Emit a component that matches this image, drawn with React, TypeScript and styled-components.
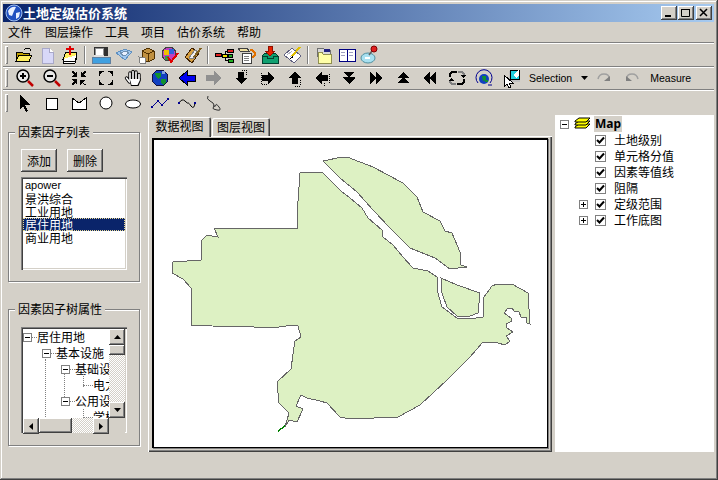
import { Fragment } from "react";
import styled, { createGlobalStyle, css } from "styled-components";

const FONT = `"Noto Sans CJK SC", "Liberation Sans", sans-serif`;

const GlobalStyle = createGlobalStyle`
  html, body {
    margin: 0;
    padding: 0;
    background: #d4d0c8;
  }
  * {
    box-sizing: border-box;
  }
`;

const raised = css`
  background: #d4d0c8;
  box-shadow: inset -1px -1px 0 #404040, inset 1px 1px 0 #fff, inset -2px -2px 0 #808080;
`;

const sunken = css`
  box-shadow: inset 1px 1px 0 #808080, inset 2px 2px 0 #404040, inset -1px -1px 0 #fff, inset -2px -2px 0 #d4d0c8;
`;

const Window = styled.div`
  width: 718px;
  height: 480px;
  padding: 4px 4px 4px 3px;
  display: flex;
  flex-direction: column;
  background: #d4d0c8;
  box-shadow: inset -1px -1px 0 #404040, inset 1px 1px 0 #d4d0c8, inset -2px -2px 0 #808080, inset 2px 2px 0 #fff;
  font: 12px/14px ${FONT};
  color: #000;
  overflow: hidden;
`;

const TitleBar = styled.div`
  height: 18px;
  flex: none;
  display: flex;
  align-items: center;
  padding: 0 2px;
  background: linear-gradient(90deg, #0a246a, #a6caf0);
`;

const TitleText = styled.span`
  font-size: 13px;
  font-weight: 700;
  color: #fff;
  flex: 1;
`;

const CaptionButtons = styled.div`
  display: flex;
`;

const CaptionButton = styled.div<{ $gap?: number }>`
  ${raised};
  width: 16px;
  height: 14px;
  margin-left: ${(p) => p.$gap ?? 1}px;
  display: flex;
  align-items: center;
  justify-content: center;
`;

const MenuBar = styled.div`
  height: 20px;
  flex: none;
  display: flex;
  align-items: center;
  padding-left: 5px;
`;

const MenuItem = styled.span`
  margin-right: 12px;
  &:first-child {
    margin-right: 13px;
  }
`;

const Toolbar = styled.div<{ $h: number }>`
  height: ${(p) => p.$h}px;
  flex: none;
  display: flex;
  align-items: center;
  padding: 1px 0 0 2px;
  box-shadow: inset 0 1px 0 #808080, inset 0 2px 0 #fff;
`;

const Handle = styled.div<{ $mr: number }>`
  width: 3px;
  height: 18px;
  margin-right: ${(p) => p.$mr}px;
  background: #d4d0c8;
  box-shadow: inset 1px 1px 0 #fff, inset -1px -1px 0 #808080;
`;

const Slot = styled.div<{ $w: number }>`
  width: ${(p) => p.$w}px;
  flex: none;
  height: 20px;
  display: flex;
  align-items: center;
  justify-content: center;
`;

const Sep = styled.div`
  width: 8px;
  flex: none;
  height: 18px;
  display: flex;
  justify-content: center;
  &::before {
    content: "";
    width: 2px;
    background: #808080;
    box-shadow: inset -1px 0 0 #fff;
  }
`;

const ToolLabel = styled.span<{ $ml: number }>`
  margin-left: ${(p) => p.$ml}px;
  font: 10.5px/14px "Liberation Sans", sans-serif;
  color: #000;
`;

const Ico = styled.svg`
  width: 20px;
  height: 20px;
  display: block;
  shape-rendering: crispEdges;
`;

const Main = styled.div`
  height: 337px;
  flex: none;
  display: flex;
`;

const LeftPane = styled.div`
  width: 145px;
  flex: none;
  padding-left: 5px;
`;

const Group = styled.div<{ $mt: number; $h: number; $pt: number }>`
  position: relative;
  width: 132px;
  height: ${(p) => p.$h}px;
  margin-top: ${(p) => p.$mt}px;
  padding: ${(p) => p.$pt}px 0 0 12px;
  border: 1px solid #808080;
  box-shadow: inset 1px 1px 0 #fff, 1px 1px 0 #fff;
`;

const Legend = styled.div`
  position: absolute;
  left: 6px;
  top: -8px;
  padding: 0 3px;
  background: #d4d0c8;
  line-height: 14px;
`;

const ButtonRow = styled.div`
  display: flex;
  gap: 10px;
`;

const PushButton = styled.button`
  ${raised};
  width: 36px;
  height: 23px;
  padding: 0;
  border: 0;
  font: 12px/14px ${FONT};
  color: #000;
`;

const ListBox = styled.div`
  ${sunken};
  width: 106px;
  height: 93px;
  margin-top: 5px;
  padding: 2px;
  background: #fff;
`;

const ListItem = styled.div<{ $selected?: boolean; $latin?: boolean }>`
  height: 13px;
  padding-left: 2px;
  line-height: 13px;
  white-space: nowrap;
  font-family: ${(p) => (p.$latin ? `"Liberation Sans", sans-serif` : FONT)};
  font-size: ${(p) => (p.$latin ? 11 : 12)}px;
  background: ${(p) => (p.$selected ? "#0a246a" : "transparent")};
  color: ${(p) => (p.$selected ? "#fff" : "#000")};
  outline: ${(p) => (p.$selected ? "1px dotted #e8d890" : "none")};
  outline-offset: -1px;
`;

const TreeBox = styled.div`
  ${sunken};
  width: 106px;
  height: 106px;
  padding: 2px;
  background: #fff;
  display: grid;
  grid-template-columns: 86px 16px;
  grid-template-rows: 89px 15px;
`;

const TreeContent = styled.div`
  position: relative;
  overflow: hidden;
`;

const TreeRow = styled.div<{ $level: number }>`
  height: 16px;
  display: flex;
  align-items: center;
  white-space: nowrap;
  padding-left: ${(p) => p.$level * 19}px;
`;

const Expander = styled.span<{ $open?: boolean }>`
  position: relative;
  width: 9px;
  height: 9px;
  flex: none;
  border: 1px solid #808080;
  background: #fff;
  &::before {
    content: "";
    position: absolute;
    left: 1px;
    top: 3px;
    width: 5px;
    height: 1px;
    background: #000;
  }
  &::after {
    content: "";
    display: ${(p) => (p.$open ? "none" : "block")};
    position: absolute;
    left: 3px;
    top: 1px;
    width: 1px;
    height: 5px;
    background: #000;
  }
`;

const Connector = styled.span<{ $w: number; $ml?: number }>`
  width: ${(p) => p.$w}px;
  flex: none;
  margin-left: ${(p) => p.$ml ?? 0}px;
  border-top: 1px dotted #808080;
`;

const Guide = styled.span<{ $x: number; $y: number; $h: number }>`
  position: absolute;
  left: ${(p) => p.$x}px;
  top: ${(p) => p.$y}px;
  height: ${(p) => p.$h}px;
  border-left: 1px dotted #808080;
`;

const VScroll = styled.div`
  display: flex;
  flex-direction: column;
`;

const HScroll = styled.div`
  display: flex;
`;

const ScrollButton = styled.div`
  ${raised};
  width: 16px;
  height: 16px;
  flex: none;
  display: flex;
  align-items: center;
  justify-content: center;
`;

const ScrollThumb = styled.div<{ $size: number; $horizontal?: boolean }>`
  ${raised};
  flex: none;
  ${(p) => (p.$horizontal ? `width: ${p.$size}px;` : `height: ${p.$size}px;`)}
`;

const ScrollTrack = styled.div`
  flex: 1;
  background: repeating-conic-gradient(#d4d0c8 0 25%, #fff 0 50%) 0 0 / 2px 2px;
`;

const Corner = styled.div`
  background: #d4d0c8;
`;

const CenterPane = styled.div`
  width: 407px;
  flex: none;
  display: flex;
  flex-direction: column;
`;

const TabStrip = styled.div`
  height: 21px;
  flex: none;
  display: flex;
  align-items: flex-end;
  position: relative;
  z-index: 1;
`;

const Tab = styled.div<{ $active?: boolean }>`
  width: ${(p) => (p.$active ? 63 : 58)}px;
  height: ${(p) => (p.$active ? 20 : 18)}px;
  margin-left: ${(p) => (p.$active ? 0 : 1)}px;
  margin-bottom: ${(p) => (p.$active ? -1 : 0)}px;
  padding-top: 2px;
  text-align: center;
  background: #d4d0c8;
  border-radius: 2px 2px 0 0;
  box-shadow: inset 1px 1px 0 #fff, inset -1px 0 0 #404040, inset -2px 0 0 #808080;
`;

const TabBody = styled.div`
  width: 404px;
  height: 316px;
  padding: 2px 4px 3px 4px;
  background: #d4d0c8;
  box-shadow: inset 1px 1px 0 #fff, inset -1px -1px 0 #404040, inset -2px -2px 0 #808080;
`;

const MapFrame = styled.div`
  width: 396px;
  height: 310px;
  background: #fff;
  border: 1px solid #000;
  box-shadow: inset 1px 1px 0 #000, 1px 1px 0 #808080;
`;

const MapSvg = styled.svg`
  display: block;
  width: 394px;
  height: 308px;
  shape-rendering: crispEdges;
`;

const LayerPane = styled.div`
  width: 159px;
  flex: none;
  background: #fff;
  padding-top: 1px;
`;

const LayerRow = styled.div<{ $root?: boolean }>`
  height: 16px;
  display: flex;
  align-items: center;
  padding-left: ${(p) => (p.$root ? 5 : 24)}px;
`;

const ExpanderSlot = styled.span`
  width: 16px;
  flex: none;
  display: flex;
`;

const MapName = styled.span`
  margin-left: 3px;
  padding: 0 1px;
  height: 16px;
  background: #d4d0c8;
  font: 700 12px/16px "Noto Sans", sans-serif;
`;

const CheckBox = styled.span`
  width: 11px;
  height: 11px;
  flex: none;
  margin-right: 8px;
  border: 1px solid #808080;
  background: #fff;
  display: flex;
  align-items: center;
  justify-content: center;
`;

const StatusBar = styled.div`
  flex: 1;
`;

const MAIN_SHAPE =
  "214,228 297,228 297,215 299,187 300,173 322,172 341,191 350,198 362,208 368,218 382,230 383,237 393,245 403,257 413,268 428,271 437,277 438,293 442,307 457,318 470,319 483,317 484,297 492,286 497,284 512,284 528,293 530,324 527,323 526,317 521,317 519,312 514,311 512,308 508,308 504,313 511,318 512,321 506,324 507,328 513,332 506,336 510,341 505,345 498,343 483,342 470,357 447,380 420,405 398,417 350,419 340,417 327,403 320,401 307,398 301,395 296,406 303,409 297,422 289,420 285,427 289,413 279,403 277,382 291,369 294,347 295,341 301,337 298,326 293,325 279,327 254,327 212,326 191,325 191,307 191,288 183,279 172,273 173,262 187,261 201,260 201,241 207,235 212,236 218,237";

const NORTH_ISLAND =
  "323,161 342,157 347,157 373,167 403,183 417,197 423,212 440,221 445,231 452,233 460,252 461,265 467,267 450,269 435,258 410,248 390,228 373,210 357,192 340,178";

const INNER_ISLAND = "441,278 457,285 480,293 478,313 470,316 457,316 447,307 442,293";

const Magnifier = ({ minus }: { minus?: boolean }) => (
  <Ico viewBox="0 0 20 20" style={{ shapeRendering: "auto" }}>
    <circle cx="8" cy="8" r="6" fill="#e8e8e8" stroke="#000" strokeWidth="1.5" />
    <path d="M5 8h6" stroke="#000" strokeWidth="2" />
    {!minus && <path d="M8 5v6" stroke="#000" strokeWidth="2" />}
    <path d="M13 13l5 5" stroke="#c00000" strokeWidth="2.5" />
  </Ico>
);

const CornerArrows = ({ out }: { out?: boolean }) => (
  <Ico viewBox="0 0 20 20">
    {out ? (
      <path d="M3 3h5v1H6v1H5v1H4v2H3zM17 3v5h-1V6h-1V5h-1V4h-2V3zM3 17v-5h1v2h1v1h1v1h2v1zM17 17h-5v-1h2v-1h1v-1h1v-2h1z" fill="#000" />
    ) : (
      <path d="M3 3h2v1h1v1h1V4h1v5H3V8h1V7h1V6H4V5H3zM17 3v2h-1v1h-1v1h1v1h1v1h-5V4h1v1h1V4h1V3zM3 17v-2h1v-1h1v-1H4v-1H3v-1h5v5H7v-1H6v1H5v1zM17 17h-2v-1h-1v-1h-1v1h-1v1h-1v-5h5v1h-1v1h-1v1h1v1h1z" fill="#000" />
    )}
  </Ico>
);

const ArrowShape = ({ points, fill, stroke }: { points: string; fill: string; stroke?: string }) => (
  <Ico viewBox="0 0 20 20">
    <polygon points={points} fill={fill} stroke={stroke ?? "none"} />
  </Ico>
);

const DottedArrow = ({ points, dots }: { points: string; dots: string }) => (
  <Ico viewBox="0 0 20 20">
    <path d={dots} stroke="#000" strokeWidth="1" strokeDasharray="1 1" fill="none" />
    <polygon points={points} fill="#000" />
  </Ico>
);

const toolbarOne = [
  <Ico viewBox="0 0 20 20" key="open">
    <path d="M2 7h6l1 1h6v8H2z" fill="#c0a000" stroke="#000" />
    <path d="M2 16l3-6h13l-3 6z" fill="#ffef60" stroke="#000" />
    <path d="M10 5q3-3 6-1l1 2" fill="none" stroke="#000" />
  </Ico>,
  <Ico viewBox="0 0 20 20" key="new">
    <path d="M5 3h7l4 4v11H5z" fill="#d8d8f8" stroke="#a8a8c8" />
    <path d="M12 3v4h4" fill="#fff" stroke="#a8a8c8" />
  </Ico>,
  <Ico viewBox="0 0 20 20" key="add">
    <path d="M3 14l3-7h11l-2 7z" fill="#ffef60" stroke="#000" />
    <path d="M3 14v2h12l2-6M3 16v2h12l2-6" fill="#fff" stroke="#000" />
    <path d="M10 1v9M6 4h8" stroke="#e00000" strokeWidth="2" />
  </Ico>,
  <Ico viewBox="0 0 20 20" key="save">
    <path d="M3 2h14v9H3z" fill="#303030" />
    <path d="M4 3h8v7H4z" fill="#fff" stroke="#909090" />
    <path d="M1 12h18v6H1z" fill="#40a0e0" stroke="#6080a0" />
    <path d="M3 10h10v2H3z" fill="#e0e0e0" />
  </Ico>,
  <Ico viewBox="0 0 20 20" key="tape">
    <path d="M2 8l9-4 7 3-3 3-4 5-5-4z" fill="#a0c8f0" stroke="#6090c0" />
    <path d="M6 8l6-2 3 2-5 3z" fill="#e8f0ff" stroke="#7090b0" />
  </Ico>,
  <Ico viewBox="0 0 20 20" key="box">
    <path d="M5 6l6-3 6 3v8l-6 3-6-3z" fill="#c09040" stroke="#503000" />
    <path d="M5 6l6 3 6-3M11 9v8" fill="none" stroke="#503000" />
    <path d="M2 12l6 1v5H3z" fill="#fff" stroke="#808080" />
  </Ico>,
  <Ico viewBox="0 0 20 20" key="ball">
    <circle cx="9" cy="9" r="7" fill="#c040c0" stroke="#404040" />
    <path d="M4 5h5v5H4z" fill="#f0c000" />
    <path d="M9 4h5v5H9z" fill="#3060e0" />
    <path d="M5 11h4v4H5z" fill="#30a040" />
    <path d="M8 12l3 5 7-9" fill="none" stroke="#e00000" strokeWidth="2" />
  </Ico>,
  <Ico viewBox="0 0 20 20" key="note">
    <path d="M2 12l7-9 7 5-7 10z" fill="#d8a040" stroke="#402000" />
    <path d="M6 13l6-8 3 2-5 7z" fill="#f0f0f0" stroke="#808080" />
    <path d="M11 12l7-9" stroke="#806020" strokeWidth="2" />
  </Ico>,
  <Ico viewBox="0 0 20 20" key="nodes">
    <path d="M5 10h6M11 6v9M11 6h4M11 15h4" stroke="#000" />
    <path d="M1 8h6v3H1z" fill="#e02020" stroke="#000" />
    <path d="M13 4h6v3h-6z" fill="#e02020" stroke="#000" />
    <path d="M8 9h5v3H8z" fill="#f0e000" stroke="#000" />
    <path d="M14 9h4v3h-4zM14 14h5v3h-5z" fill="#20b020" stroke="#000" />
  </Ico>,
  <Ico viewBox="0 0 20 20" key="paper">
    <path d="M1 3h9l2 3H3z" fill="#f0e0a0" stroke="#404040" />
    <path d="M5 8h9v10H5z" fill="#fff" stroke="#404040" />
    <path d="M7 11h5M7 13h5M7 15h5" stroke="#808080" />
    <path d="M13 5q5 0 5 5l-3 3" fill="none" stroke="#e07000" strokeWidth="2" />
  </Ico>,
  <Ico viewBox="0 0 20 20" key="tray">
    <path d="M2 11l3-3h10l3 3v7H2z" fill="#10a070" stroke="#004030" />
    <path d="M2 11h5v2h6v-2h5" fill="none" stroke="#004030" />
    <path d="M8 1h4v5h3l-5 5-5-5h3z" fill="#e82000" stroke="#901000" />
  </Ico>,
  <Ico viewBox="0 0 20 20" key="diamond">
    <path d="M1 10l8-7 9 8-7 7z" fill="#fff" stroke="#606080" />
    <path d="M4 10l5-4M7 12l5-4" stroke="#b0b0c0" />
    <path d="M9 11l8-9" stroke="#e0c000" strokeWidth="2" />
    <path d="M7 14l2-3 2 1z" fill="#000" />
  </Ico>,
  <Ico viewBox="0 0 20 20" key="folders">
    <path d="M3 3h6l2 2h5v6H3z" fill="#d8d8d8" stroke="#707070" />
    <path d="M4 7h4l1 2h8v9H4z" fill="#ffffa8" stroke="#909050" />
    <path d="M10 4h6v3h-6z" fill="#202080" />
  </Ico>,
  <Ico viewBox="0 0 20 20" key="book">
    <path d="M2 4h7l1 1 1-1h7v12h-7l-1 1-1-1H2z" fill="#fff" stroke="#000080" />
    <path d="M10 5v12M4 16h12" stroke="#000080" />
    <path d="M4 7h4M4 10h4M12 7h4M12 10h4" stroke="#a0a0c0" />
  </Ico>,
  <Ico viewBox="0 0 20 20" key="pin" style={{ shapeRendering: "auto" }}>
    <ellipse cx="8" cy="13" rx="7" ry="5" fill="#a8e0f0" stroke="#5090a0" />
    <path d="M5 13h5" stroke="#fff" strokeWidth="2" />
    <path d="M9 10l3-4" stroke="#606060" strokeWidth="1.5" />
    <circle cx="14" cy="4" r="3" fill="#e02020" stroke="#800000" />
  </Ico>,
];

const toolbarTwo = [
  <Magnifier key="zi" />,
  <Magnifier minus key="zo" />,
  <CornerArrows key="ci" />,
  <CornerArrows out key="co" />,
  <Ico viewBox="0 0 20 20" key="hand" style={{ shapeRendering: "auto" }}>
    <g fill="none" stroke="#000" strokeWidth="3.4" strokeLinecap="round">
      <path d="M3.500 10L6.500 14M7 5v7M10 3.500V11M13 4v7M16 6.500V12" />
    </g>
    <path d="M6 10h11.500v3l-2 5H8z" fill="#000" />
    <g fill="none" stroke="#fff" strokeWidth="1.6" strokeLinecap="round">
      <path d="M3.500 10L6.500 14M7 5v7M10 3.500V11M13 4v7M16 6.500V12" />
    </g>
    <path d="M7 11h9.500v2l-2 4H8.500z" fill="#fff" />
  </Ico>,
  <Ico viewBox="0 0 20 20" key="globe">
    <circle cx="10" cy="10" r="8" fill="#1040c0" stroke="#101040" />
    <path d="M5 5h6v3l-2 3-3-2zM11 11h5v3l-3 3-2-2z" fill="#109030" />
    <path d="M12 3h3v3h-3z" fill="#80a0e0" />
  </Ico>,
  <ArrowShape key="bl" points="10,3 10,7 18,7 18,13 10,13 10,17 2,10" fill="#0000f0" stroke="#000" />,
  <ArrowShape key="gr" points="10,3 10,7 2,7 2,13 10,13 10,17 18,10" fill="#909090" />,
  <DottedArrow key="d" points="7,4 13,4 13,10 16,10 10,16 4,10 7,10" dots="M11 2h4v6" />,
  <DottedArrow key="r" points="4,7 10,7 10,4 17,10 10,16 10,13 4,13" dots="M3 5v11h6" />,
  <DottedArrow key="u" points="10,3 16,10 13,10 13,16 7,16 7,10 4,10" dots="M15 12v6h-5" />,
  <DottedArrow key="l" points="3,10 10,4 10,7 16,7 16,13 10,13 10,16" dots="M17 6v9M12 15v4" />,
  <ArrowShape key="dd" points="4,4 16,4 10,9 16,9 16,10 10,16 4,10 4,9 10,9" fill="#000" />,
  <ArrowShape key="rr" points="4,4 10,9 10,4 16,10 10,16 10,11 4,16" fill="#000" />,
  <ArrowShape key="uu" points="10,4 16,10 11,10 16,15 4,15 9,10 4,10" fill="#000" />,
  <ArrowShape key="ll" points="3,10 10,4 10,9 16,4 16,16 10,11 10,16" fill="#000" />,
  <Ico viewBox="0 0 20 20" key="cycle">
    <path d="M3 9V6l2-2h5" fill="none" stroke="#000" strokeWidth="2" />
    <path d="M17 11v3l-2 2h-5" fill="none" stroke="#000" strokeWidth="2" />
    <path d="M11 4h4l2 2v1" fill="none" stroke="#808080" strokeWidth="2" />
    <path d="M9 16H5l-2-2v-1" fill="none" stroke="#808080" strokeWidth="2" />
    <path d="M13 7h6l-3 3zM1 13h6l-3-3z" fill="#000" />
  </Ico>,
  <Ico viewBox="0 0 20 20" key="globeArc" style={{ shapeRendering: "auto" }}>
    <circle cx="10" cy="11" r="5" fill="#1040c0" />
    <path d="M8 8h4v4l-3 1zM11 12h3v2h-3z" fill="#109030" />
    <path d="M4 15A8 8 0 1 1 16 15" fill="none" stroke="#000090" strokeWidth="1" />
    <path d="M14 17h4" stroke="#000090" />
  </Ico>,
  <Ico viewBox="0 0 20 20" key="cursorMap">
    <path d="M8 3h11v11H8z" fill="#c0c0c0" />
    <path d="M9 2h9v9H9z" fill="#20d0e0" stroke="#000" />
    <path d="M12 7l6-5v5l-3 3z" fill="#fff" />
    <path d="M3 7v12l3-3 2 4 2-1-2-4h4z" fill="#fff" stroke="#000" />
  </Ico>,
];

const toolbarThree = [
  <Ico viewBox="0 0 20 20" key="pointer">
    <path d="M5 2l10 10h-5l3 6-2 1-3-6-3 3z" fill="#000" />
  </Ico>,
  <Ico viewBox="0 0 20 20" key="rect">
    <rect x="4" y="5" width="11" height="11" fill="#fff" stroke="#000" />
  </Ico>,
  <Ico viewBox="0 0 20 20" key="poly">
    <path d="M3 5l7 5 7-5v11H3z" fill="#fff" stroke="#000" />
  </Ico>,
  <Ico viewBox="0 0 20 20" key="circle" style={{ shapeRendering: "auto" }}>
    <circle cx="10" cy="10" r="6" fill="#fff" stroke="#000" />
  </Ico>,
  <Ico viewBox="0 0 20 20" key="ellipse" style={{ shapeRendering: "auto" }}>
    <ellipse cx="10" cy="11" rx="7.5" ry="4" fill="#fff" stroke="#000" />
  </Ico>,
  <Ico viewBox="0 0 20 20" key="line" style={{ shapeRendering: "auto" }}>
    <path d="M2 14l6-6 4 4 6-6" fill="none" stroke="#000090" />
    <path d="M1 13h2v2H1zM7 7h2v2H7zM11 11h2v2h-2zM17 5h2v2h-2z" fill="#000090" />
  </Ico>,
  <Ico viewBox="0 0 20 20" key="curve" style={{ shapeRendering: "auto" }}>
    <path d="M2 10q3-5 6-2t3 2 3 3 4-3" fill="none" stroke="#000" />
    <path d="M1 9h2v2H1zM17 9h2v2h-2z" fill="#000090" />
  </Ico>,
  <Ico viewBox="0 0 20 20" key="free" style={{ shapeRendering: "auto" }}>
    <path d="M4 3q-2 3 2 5t4 4-1 3 4 2 2-3-3-2-3 1" fill="none" stroke="#303030" />
  </Ico>,
];

const menus = ["文件", "图层操作", "工具", "项目", "估价系统", "帮助"];
const factors = ["apower", "景洪综合", "工业用地", "居住用地", "商业用地"];
const layers = [
  { name: "土地级别" },
  { name: "单元格分值" },
  { name: "因素等值线" },
  { name: "阻隔" },
  { name: "定级范围", folded: true },
  { name: "工作底图", folded: true },
];

function App() {
  return (
    <Window>
      <GlobalStyle />
      <TitleBar>
        <svg width="18" height="18" viewBox="0 0 18 18">
          <circle cx="9" cy="9" r="8" fill="#2050c0" stroke="#a0c0f0" />
          <path d="M3 7q3-5 8-4l-2 4-2 5-3-1zM11 9l4-1-1 5-3 2z" fill="#e8f0ff" />
        </svg>
        <TitleText>土地定级估价系统</TitleText>
        <CaptionButtons>
          <CaptionButton>
            <svg width="10" height="10">
              <path d="M1 7h6v2H1z" fill="#000" />
            </svg>
          </CaptionButton>
          <CaptionButton>
            <svg width="10" height="10">
              <path d="M0.5 1.5h8v7h-8z" fill="none" stroke="#000" />
              <path d="M0 1h9v1H0z" fill="#000" />
            </svg>
          </CaptionButton>
          <CaptionButton $gap={2}>
            <svg width="10" height="10">
              <path d="M1 1l7 7M8 1L1 8" stroke="#000" strokeWidth="1.5" />
            </svg>
          </CaptionButton>
        </CaptionButtons>
      </TitleBar>

      <MenuBar>
        {menus.map((m) => (
          <MenuItem key={m}>{m}</MenuItem>
        ))}
      </MenuBar>

      <Toolbar $h={24}>
        <Handle $mr={4} />
        {toolbarOne.map((icon, i) => (
          <Fragment key={i}>
            {(i === 3 || i === 8 || i === 12) && <Sep />}
            <Slot $w={23}>{icon}</Slot>
          </Fragment>
        ))}
      </Toolbar>

      <Toolbar $h={23}>
        <Handle $mr={3} />
        {toolbarTwo.map((icon, i) => (
          <Slot $w={27} key={i}>
            {icon}
          </Slot>
        ))}
        <ToolLabel $ml={5}>Selection</ToolLabel>
        <Slot $w={24}>
          <svg width="7" height="4">
            <path d="M0 0h7L3.500 4z" fill="#000" />
          </svg>
        </Slot>
        <Slot $w={16}>
          <svg width="14" height="10" viewBox="0 0 14 10">
            <path d="M1 6Q2 1 7 1t5 4" fill="none" stroke="#a0a0a0" strokeWidth="1.500" />
            <path d="M7 8h6V3z" fill="#808080" />
          </svg>
        </Slot>
        <Slot $w={12} />
        <Slot $w={16}>
          <svg width="14" height="10" viewBox="0 0 14 10">
            <path d="M13 6Q12 1 7 1T2 5" fill="none" stroke="#a0a0a0" strokeWidth="1.500" />
            <path d="M7 8H1V3z" fill="#808080" />
          </svg>
        </Slot>
        <ToolLabel $ml={10}>Measure</ToolLabel>
      </Toolbar>

      <Toolbar $h={26}>
        <Handle $mr={3} />
        {toolbarThree.map((icon, i) => (
          <Slot $w={27} key={i}>
            {icon}
          </Slot>
        ))}
      </Toolbar>

      <Main>
        <LeftPane>
          <Group $mt={17} $h={150} $pt={16}>
            <Legend>因素因子列表</Legend>
            <ButtonRow>
              <PushButton>添加</PushButton>
              <PushButton>删除</PushButton>
            </ButtonRow>
            <ListBox>
              {factors.map((f) => (
                <ListItem key={f} $selected={f === "居住用地"} $latin={f === "apower"}>
                  {f}
                </ListItem>
              ))}
            </ListBox>
          </Group>

          <Group $mt={27} $h={137} $pt={17}>
            <Legend>因素因子树属性</Legend>
            <TreeBox>
              <TreeContent>
                <Guide $x={22} $y={30} $h={58} />
                <Guide $x={41} $y={45} $h={25} />
                <Guide $x={60} $y={45} $h={13} />
                <Guide $x={60} $y={80} $h={9} />
                <TreeRow $level={0}>
                  <Expander $open />
                  <Connector $w={5} />
                  居住用地
                </TreeRow>
                <TreeRow $level={1}>
                  <Expander $open />
                  <Connector $w={5} />
                  基本设施
                </TreeRow>
                <TreeRow $level={2}>
                  <Expander $open />
                  <Connector $w={5} />
                  基础设施
                </TreeRow>
                <TreeRow $level={3}>
                  <Connector $w={10} $ml={3} />
                  <span>电力</span>
                </TreeRow>
                <TreeRow $level={2}>
                  <Expander $open />
                  <Connector $w={5} />
                  公用设施
                </TreeRow>
                <TreeRow $level={3}>
                  <Connector $w={10} $ml={3} />
                  <span>学校</span>
                </TreeRow>
              </TreeContent>
              <VScroll>
                <ScrollButton>
                  <svg width="7" height="4">
                    <path d="M3.500 0L7 4H0z" fill="#000" />
                  </svg>
                </ScrollButton>
                <ScrollThumb $size={10} />
                <ScrollTrack />
                <ScrollButton>
                  <svg width="7" height="4">
                    <path d="M0 0h7L3.500 4z" fill="#000" />
                  </svg>
                </ScrollButton>
              </VScroll>
              <HScroll>
                <ScrollButton>
                  <svg width="4" height="7">
                    <path d="M4 0v7L0 3.500z" fill="#000" />
                  </svg>
                </ScrollButton>
                <ScrollThumb $size={33} $horizontal />
                <ScrollTrack />
                <ScrollButton>
                  <svg width="4" height="7">
                    <path d="M0 0v7l4-3.500z" fill="#000" />
                  </svg>
                </ScrollButton>
              </HScroll>
              <Corner />
            </TreeBox>
          </Group>
        </LeftPane>

        <CenterPane>
          <TabStrip>
            <Tab $active>数据视图</Tab>
            <Tab>图层视图</Tab>
          </TabStrip>
          <TabBody>
            <MapFrame>
              <MapSvg viewBox="153 139 394 308">
                <polygon points={MAIN_SHAPE} fill="#ddf1c3" stroke="#666" />
                <polygon points={NORTH_ISLAND} fill="#ddf1c3" stroke="#666" />
                <polygon points={INNER_ISLAND} fill="#ddf1c3" stroke="#666" />
                <path d="M285 426l-7 5" stroke="#008000" strokeWidth="1.500" fill="none" />
              </MapSvg>
            </MapFrame>
          </TabBody>
        </CenterPane>

        <LayerPane>
          <LayerRow $root>
            <Expander $open />
            <svg width="17" height="14" viewBox="0 0 17 14" style={{ marginLeft: 5 }}>
              <path d="M1 10l4-3h11l-4 4H1z" fill="#ffff00" stroke="#000" />
              <path d="M1 7l4-3h11l-4 4H1z" fill="#ffff00" stroke="#000" />
              <path d="M1 4l4-3h11l-4 4H1z" fill="#ffff00" stroke="#000" />
            </svg>
            <MapName>Map</MapName>
          </LayerRow>
          {layers.map((l) => (
            <LayerRow key={l.name}>
              <ExpanderSlot>{l.folded && <Expander />}</ExpanderSlot>
              <CheckBox>
                <svg width="9" height="9" viewBox="0 0 9 9">
                  <path d="M1 4l2.500 2.500L8 1.500" fill="none" stroke="#000" strokeWidth="2" />
                </svg>
              </CheckBox>
              {l.name}
            </LayerRow>
          ))}
        </LayerPane>
      </Main>

      <StatusBar />
    </Window>
  );
}

export default App;
